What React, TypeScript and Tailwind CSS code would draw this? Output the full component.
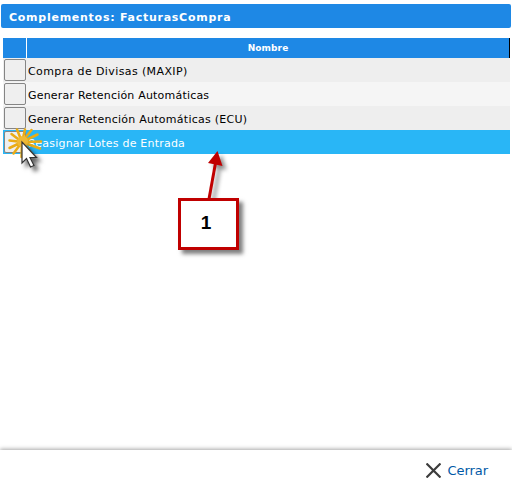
const rows = [
  { label: "Compra de Divisas (MAXIP)", style: "bg-[#eeeeee] text-black tracking-[0.39px]" },
  { label: "Generar Retención Automáticas", style: "bg-[#f5f5f5] text-black tracking-[0.2px]" },
  { label: "Generar Retención Automáticas (ECU)", style: "bg-[#eeeeee] text-black tracking-[0.26px]" },
  { label: "Reasignar Lotes de Entrada", style: "bg-[#29b6f6] text-white tracking-[0.21px]" },
];

function ClickCursor() {
  return (
    <svg className="absolute left-0 top-[120px] pointer-events-none" width="60" height="60" viewBox="0 120 60 60">
      <defs>
        <filter id="cursorShadow" x="-50%" y="-50%" width="220%" height="220%">
          <feDropShadow dx="4" dy="4" stdDeviation="2" floodColor="#000" floodOpacity="0.6" />
        </filter>
      </defs>
      <g stroke="#eaac14" strokeWidth="2.5" strokeLinecap="round">
        <path d="M22 142L9.500 140.500M22 142L11.500 134M22 142L17 129.500M22 142L25 129.500M22 142L31.500 130M22 142L37.500 134.500M22 142L41 141.500M22 142L40 148.500M22 142L31 152.500M22 142L21.500 157M22 142L13.500 153.500M22 142L9.500 148" />
      </g>
      <circle cx="22.500" cy="141.500" r="5.500" fill="#efb934" />
      <path
        d="M22 142V163L26.500 158.500L30.500 167L34 165.500L30 157.500H36.500Z"
        fill="#fff"
        stroke="#333"
        strokeWidth="1.2"
        filter="url(#cursorShadow)"
      />
    </svg>
  );
}

function Callout() {
  return (
    <div className="absolute left-[178px] top-[150px] h-[100px] w-[61px] pointer-events-none">
      <svg className="absolute left-0 top-0 overflow-visible" width="61" height="50">
        <g className="drop-shadow-[4px_4px_2px_rgba(0,0,0,0.45)]">
          <path d="M31 49L37.500 13" stroke="#c00000" strokeWidth="3" />
          <path d="M39.500 1L30 13L44.500 16Z" fill="#c00000" />
        </g>
      </svg>
      <div className="absolute bottom-0 left-0 flex h-[52px] w-[61px] items-center justify-center border-[3px] border-[#c00000] bg-white pr-[5px] pb-[3px] shadow-[4px_4px_4px_rgba(0,0,0,0.5)]">
        <span className="font-['Liberation_Sans',Arial,sans-serif] text-[19px] font-bold leading-none text-black">1</span>
      </div>
    </div>
  );
}

export default function App() {
  return (
    <div className="relative flex h-[491px] w-[512px] flex-col overflow-hidden bg-white pt-1 font-['DejaVu_Sans',Verdana,sans-serif] text-[11px]">
      <header className="mx-px flex h-6 w-[510px] shrink-0 items-center whitespace-nowrap rounded-[2px] bg-[#1e88e5] pl-2 pt-1 font-bold tracking-[0.74px] text-white">
        Complementos: FacturasCompra
      </header>

      <main className="ml-[3px] mt-2.5 w-[507px]">
        <div className="flex h-5 bg-[#1e88e5]">
          <div className="w-6 border-r border-white" />
          <div className="flex flex-1 items-center justify-center border-r border-black pt-0.5 text-[9px] font-bold tracking-[0.1px] text-white">
            Nombre
          </div>
        </div>
        {rows.map((row) => (
          <div key={row.label} className={`flex h-6 items-center whitespace-nowrap pl-px ${row.style}`}>
            <button
              aria-label={row.label}
              className="mr-0.5 h-[22px] w-[22px] shrink-0 rounded-[2px] border border-[#858585] bg-[#efefef]"
            />
            <span className="pt-1">{row.label}</span>
          </div>
        ))}
      </main>

      <footer className="mt-auto flex h-[41px] items-center justify-end bg-white pr-6 shadow-[0_-1px_4px_rgba(0,0,0,0.35)]">
        <button className="flex items-center gap-1.5">
          <svg width="15" height="15" viewBox="0 0 15 15" stroke="#3c3c3c" strokeWidth="2.2">
            <path d="M.5.5L14.500 14.500M14.500.5L.5 14.500" />
          </svg>
          <span className="text-[13px] leading-5 tracking-[-0.05px] text-[#0059a6]">Cerrar</span>
        </button>
      </footer>

      <Callout />
      <ClickCursor />
    </div>
  );
}
